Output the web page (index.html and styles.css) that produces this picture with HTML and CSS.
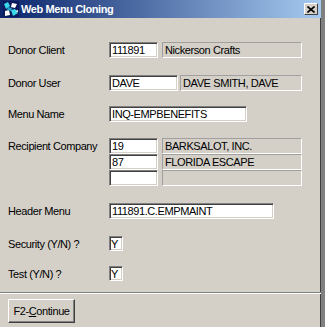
FILE: index.html
```html
<!DOCTYPE html>
<html lang="en">
<head>
  <meta charset="UTF-8" />
  <title>Web Menu Cloning</title>
  <link rel="stylesheet" href="styles.css">
</head>
<body>
  <div class="window">
    <div class="titlebar">
      <svg class="app-icon" viewBox="0 0 16 16" width="16" height="16">
        <rect x="0" y="0" width="16" height="16" fill="#0a1a5c"/>
        <path d="M1 3 L5 1 L7 5 L3 8 Z" fill="#38d8e8"/>
        <path d="M9 2 L14 3 L12 7 L8 6 Z" fill="#ffffff"/>
        <path d="M2 10 L6 9 L7 14 L2 15 Z" fill="#ffffff"/>
        <path d="M8 9 L12 8 L15 12 L10 15 Z" fill="#38d8e8"/>
        <path d="M5 6 L9 7 L8 10 L4 9 Z" fill="#1fa0c8"/>
        <path d="M12 10 L15 9 L15 11 Z" fill="#ffffff"/>
      </svg>
      <span class="title">Web Menu Cloning</span>
      <span class="close-btn">
        <svg viewBox="0 0 8 7" width="8" height="7">
          <path d="M0.5 0.5 L7.5 6.5 M7.5 0.5 L0.5 6.5" stroke="#000" stroke-width="1.6"/>
        </svg>
      </span>
    </div>

    <div class="form">
      <div class="row row-client">
        <span class="label">Donor Client</span>
        <span class="field w-code">111891</span>
        <span class="readonly w-desc">Nickerson Crafts</span>
      </div>
      <div class="row row-user">
        <span class="label">Donor User</span>
        <span class="field w-user">DAVE</span>
        <span class="readonly w-user-desc">DAVE SMITH, DAVE</span>
      </div>
      <div class="row row-menu">
        <span class="label">Menu Name</span>
        <span class="field w-menu">INQ-EMPBENEFITS</span>
      </div>
      <div class="row row-recip">
        <span class="label">Recipient Company</span>
        <div class="stack">
          <div class="stack-line">
            <span class="field w-code">19</span>
            <span class="readonly w-desc">BARKSALOT, INC.</span>
          </div>
          <div class="stack-line">
            <span class="field w-code">87</span>
            <span class="readonly w-desc">FLORIDA ESCAPE</span>
          </div>
          <div class="stack-line">
            <span class="field w-code"></span>
            <span class="readonly w-desc"></span>
          </div>
        </div>
      </div>
      <div class="row row-header">
        <span class="label">Header Menu</span>
        <span class="field w-header">111891.C.EMPMAINT</span>
      </div>
      <div class="row row-sec">
        <span class="label">Security (Y/N) ?</span>
        <span class="field w-flag">Y</span>
      </div>
      <div class="row row-test">
        <span class="label">Test (Y/N) ?</span>
        <span class="field w-flag">Y</span>
      </div>
    </div>

    <div class="footer">
      <button class="btn">F2-<u>C</u>ontinue</button>
    </div>
  </div>
</body>
</html>
```

FILE: styles.css
```css
body {
  margin: 0;
  background: #d4d0c8;
  font-family: "Liberation Sans", Arial, sans-serif;
  font-size: 11px;
  color: #000;
}

.window {
  width: 325px;
  height: 327px;
  box-sizing: border-box;
  background: #d4d0c8;
  border-right: 4px solid #808080;
  box-shadow: inset -1px 0 #404040;
  display: flex;
  flex-direction: column;
}

.titlebar {
  height: 18px;
  display: flex;
  align-items: center;
  padding-left: 3px;
  background: linear-gradient(to right, #0a246a, #a6caf0);
  color: #fff;
}

.app-icon {
  flex: none;
}

.title {
  margin-left: 2px;
  font-weight: bold;
  font-size: 11px;
  letter-spacing: -0.4px;
  flex: 1;
}

.close-btn {
  width: 14px;
  height: 12px;
  margin-right: 3px;
  box-sizing: border-box;
  background: #d4d0c8;
  display: flex;
  align-items: center;
  justify-content: center;
  border-top: 1px solid #fff;
  border-left: 1px solid #fff;
  border-right: 1px solid #404040;
  border-bottom: 1px solid #404040;
}

.form {
  flex: 1;
  padding: 24px 0 0 8px;
  display: flex;
  flex-direction: column;
}

.row {
  display: flex;
  align-items: center;
}

.row-user { margin-top: 17px; }
.row-menu { margin-top: 15px; }
.row-recip { margin-top: 16px; align-items: flex-start; }
.row-recip .label { margin-top: 2px; }
.row-header { margin-top: 17px; }
.row-sec { margin-top: 17px; }
.row-test { margin-top: 15px; }

.label {
  width: 101px;
  flex: none;
  letter-spacing: -0.4px;
}

.stack {
  display: flex;
  flex-direction: column;
}

.stack-line {
  display: flex;
}

.field {
  height: 16px;
  box-sizing: border-box;
  background: #fff;
  border-top: 1px solid #808080;
  border-left: 1px solid #808080;
  border-right: 1px solid #fff;
  border-bottom: 1px solid #fff;
  box-shadow: inset 1px 1px #404040, inset -1px -1px #d4d0c8;
  padding: 0 2px;
  font-size: 11px;
  letter-spacing: -0.4px;
  line-height: 14px;
  white-space: nowrap;
  overflow: hidden;
}

.readonly {
  height: 16px;
  box-sizing: border-box;
  border-top: 1px solid #a0a0a0;
  border-left: 1px solid #a0a0a0;
  border-right: 1px solid #fff;
  border-bottom: 1px solid #fff;
  padding: 0 2px;
  font-size: 11px;
  letter-spacing: -0.4px;
  line-height: 14px;
  white-space: nowrap;
}

.w-code { width: 49px; }
.w-desc { width: 140px; margin-left: 4px; }
.w-user { width: 69px; }
.w-user-desc { width: 122px; margin-left: 2px; }
.w-menu { width: 138px; }
.w-header { width: 165px; }
.w-flag { width: 14px; height: 15px; padding: 0 1px; }

.footer {
  height: 35px;
  border-top: 1px solid #808080;
  box-shadow: inset 0 1px #fff;
  padding: 6px 0 0 8px;
  box-sizing: border-box;
}

.btn {
  width: 67px;
  height: 24px;
  padding: 0;
  background: #d4d0c8;
  font-family: "Liberation Sans", Arial, sans-serif;
  font-size: 11px;
  letter-spacing: -0.4px;
  color: #000;
  border-top: 1px solid #fff;
  border-left: 1px solid #fff;
  border-right: 1px solid #404040;
  border-bottom: 1px solid #404040;
  box-shadow: inset -1px -1px #808080;
}
```
